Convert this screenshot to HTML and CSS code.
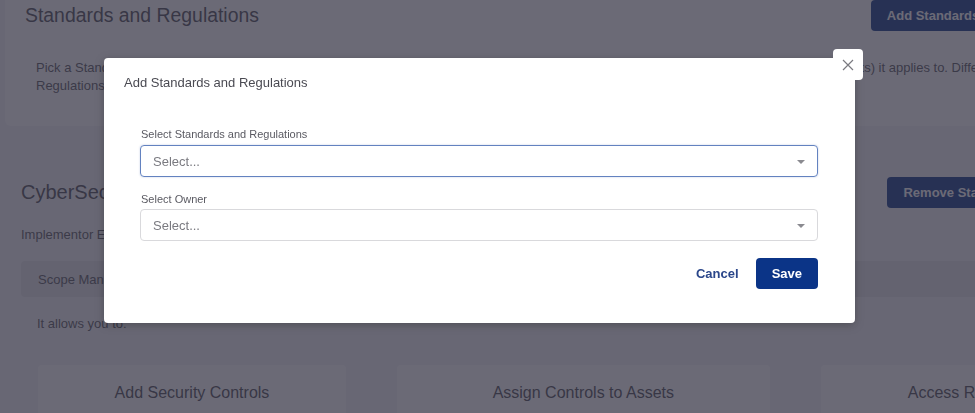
FILE: index.html
```html
<!DOCTYPE html>
<html>
<head>
<meta charset="utf-8">
<link rel="stylesheet" href="styles.css">
</head>
<body>
<div class="page">
  <section class="std-card">
    <div class="std-head">
      <h1 class="std-title">Standards and Regulations</h1>
      <button class="bg-btn">Add Standards and Regulations</button>
    </div>
    <p class="std-text">Pick a Standard or Regulation from the library to add it to your organization, then assign an owner and define the scope (asset groups and asset<span>s) it applies to. Different Standards and</span><br>Regulations can be managed independently by their owners.</p>
  </section>

  <section class="cyber">
    <div class="cyber-head">
      <h2 class="cyber-title">CyberSecurity Framework</h2>
      <button class="bg-btn bg-btn-alt">Remove Standard</button>
    </div>
    <p class="impl">Implementor Edition</p>
    <div class="scope-bar">Scope Management</div>
    <p class="allows">It allows you to:</p>
    <div class="features">
      <div class="feature f1">Add Security Controls</div>
      <div class="feature f2">Assign Controls to Assets</div>
      <div class="feature f3">Access Reports</div>
    </div>
  </section>
</div>

<div class="overlay">
  <div class="modal">
    <button class="close-btn" aria-label="Close">
      <svg width="12" height="12" viewBox="0 0 12 12"><path d="M1 1 L11 11 M11 1 L1 11" stroke="#7a7a80" stroke-width="1.2" fill="none"/></svg>
    </button>
    <div class="modal-title">Add Standards and Regulations</div>
    <div class="modal-body">
      <label class="field-label">Select Standards and Regulations</label>
      <div class="select focused">
        <span class="placeholder">Select...</span>
        <span class="caret"></span>
      </div>
      <label class="field-label second">Select Owner</label>
      <div class="select">
        <span class="placeholder">Select...</span>
        <span class="caret"></span>
      </div>
      <div class="actions">
        <button class="cancel">Cancel</button>
        <button class="save">Save</button>
      </div>
    </div>
  </div>
</div>
</body>
</html>
```
FILE: styles.css
```css
* { box-sizing: border-box; }
html, body { margin: 0; padding: 0; }
body {
  background: #f5f5f7;
  font-family: "Liberation Sans", Arial, sans-serif;
  width: 975px;
  height: 413px;
  overflow: hidden;
}
.page {
  width: 1120px;
}
button { font-family: inherit; }

.std-card {
  margin: -16px 0 0 5px;
  background: #ffffff;
  border-radius: 6px;
  padding: 16px 20px 31px 20px;
}
.std-head {
  display: flex;
  justify-content: space-between;
  align-items: center;
  height: 31px;
}
.std-title {
  margin: 0;
  font-size: 19.4px;
  font-weight: 400;
  color: #4a4a52;
}
.bg-btn {
  height: 31px;
  border: none;
  border-radius: 4px;
  background: #0b3487;
  color: #ffffff;
  font-size: 13px;
  font-weight: 700;
  padding: 0 16px;
  white-space: nowrap;
}
.std-head .bg-btn { margin-right: 0; }
.std-text {
  margin: 28px 0 0 11px;
  font-size: 13px;
  line-height: 18px;
  color: #55555c;
  white-space: nowrap;
}

.cyber {
  padding: 0 0 0 21px;
}
.cyber-head {
  display: flex;
  justify-content: space-between;
  align-items: center;
  height: 31px;
  margin-top: 51px;
}
.cyber-title {
  margin: 0;
  font-size: 20px;
  font-weight: 400;
  color: #4a4a52;
}
.bg-btn-alt { margin-right: 90px; }
.impl {
  margin: 19px 0 0 0;
  font-size: 13px;
  line-height: 16px;
  color: #55555c;
}
.scope-bar {
  margin-top: 18px;
  height: 36px;
  background: #e4e4e8;
  border-radius: 4px;
  padding: 0 17px;
  display: flex;
  align-items: center;
  font-size: 13px;
  color: #55555c;
}
.allows {
  margin: 19px 0 0 16px;
  font-size: 13px;
  line-height: 16px;
  color: #55555c;
}
.features {
  display: flex;
  gap: 51px;
  margin: 33px 0 0 17px;
}
.feature {
  background: #ffffff;
  border-radius: 4px;
  height: 80px;
  padding-top: 19px;
  text-align: center;
  font-size: 16px;
  color: #4a4a52;
}
.f1 { width: 309px; }
.f2 { width: 374px; }
.f3 { width: 300px; text-align: left; padding-left: 87px; }

.overlay {
  position: fixed;
  inset: 0;
  background: rgba(50, 48, 65, 0.72);
  padding: 58px 0 0 104px;
}
.modal {
  position: relative;
  width: 751px;
  height: 265px;
  background: #ffffff;
  border-radius: 4px;
  box-shadow: 0 2px 10px rgba(0, 0, 0, 0.25);
}
.close-btn {
  position: absolute;
  top: -9px;
  right: -8px;
  width: 30px;
  height: 31px;
  border: none;
  border-radius: 4px;
  background: #ffffff;
  display: flex;
  align-items: center;
  justify-content: center;
  padding: 0;
}
.modal-title {
  padding: 17px 20px 0 20px;
  font-size: 13px;
  line-height: 16px;
  color: #4a4a52;
}
.modal-body {
  padding: 36px 37px 0 36px;
}
.field-label {
  display: block;
  font-size: 11px;
  line-height: 14px;
  color: #5a5a62;
  margin-bottom: 4px;
  padding-left: 1px;
}
.field-label.second {
  margin-top: 15px;
  margin-bottom: 3px;
}
.select {
  position: relative;
  height: 32px;
  border: 1px solid #d9d9dc;
  border-radius: 4px;
  display: flex;
  align-items: center;
  padding: 0 12px;
}
.select.focused {
  border-color: #6382c0;
  box-shadow: 0 0 2px rgba(70, 100, 170, 0.35);
}
.placeholder {
  font-size: 13px;
  color: #7a7a80;
}
.caret {
  position: absolute;
  right: 12px;
  top: 14px;
  width: 0;
  height: 0;
  border-left: 4px solid transparent;
  border-right: 4px solid transparent;
  border-top: 4px solid #8a8a90;
}
.actions {
  display: flex;
  justify-content: flex-end;
  align-items: center;
  margin-top: 17px;
}
.cancel {
  background: none;
  border: none;
  color: #2a468a;
  font-size: 13px;
  font-weight: 700;
  padding: 0 17px 0 0;
  height: 31px;
}
.save {
  height: 31px;
  border: none;
  border-radius: 4px;
  background: #0b3487;
  color: #ffffff;
  font-size: 13px;
  font-weight: 700;
  padding: 0 16px;
}
```
